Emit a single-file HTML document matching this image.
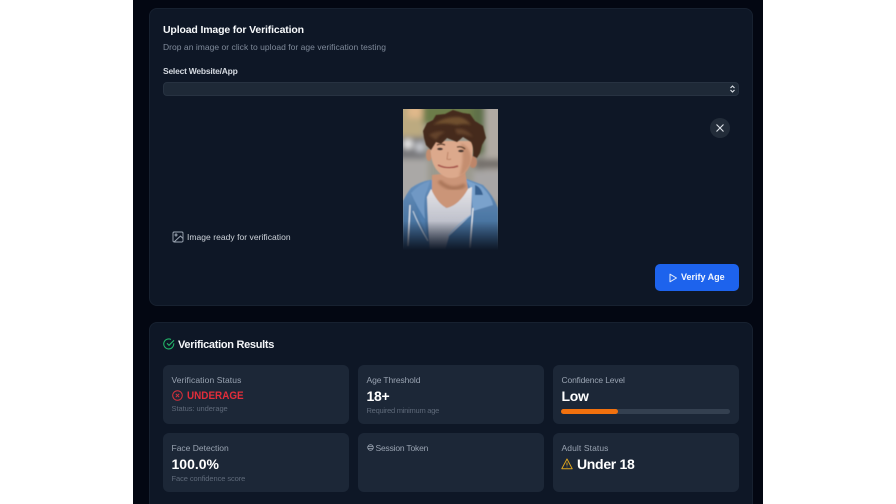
<!DOCTYPE html>
<html><head><meta charset="utf-8"><style>
*{box-sizing:border-box;margin:0;padding:0}
html,body{width:896px;height:504px;overflow:hidden;background:#fff;font-family:"Liberation Sans",sans-serif}
#root{position:absolute;left:0;top:0;width:896px;height:504px;overflow:hidden}
.wrap{position:absolute;left:133px;top:0;width:630px;height:504px;background:#030712}
.card{position:absolute;left:149px;width:604px;background:#0e1726;border:1px solid #172130;border-radius:8px}
.t{position:absolute;white-space:nowrap;line-height:1}
.stat{position:absolute;width:186px;height:59px;background:#1c2737;border-radius:6px}
.lab{color:#99a3b1;font-size:8.5px}
.sub{color:#5f6a7a;font-size:7.5px}
.val{color:#fff;font-weight:700;font-size:14px}
svg{position:absolute;display:block}
</style></head><body><div id="root">
<div class="wrap"></div>
<div class="card" style="top:8px;height:298px"></div>
<div class="card" style="top:322px;height:182px;border-bottom:0;border-radius:8px 8px 0 0"></div>

<div class="t" style="left:163px;top:25px;font-size:10.5px;font-weight:700;color:#f8fafc;letter-spacing:-.15px">Upload Image for Verification</div>
<div class="t" style="left:163px;top:43px;font-size:8.5px;color:#7f8a9a;letter-spacing:.03px">Drop an image or click to upload for age verification testing</div>
<div class="t" style="left:163px;top:67px;font-size:8.5px;font-weight:700;color:#d5dae1;letter-spacing:-.23px">Select Website/App</div>
<div style="position:absolute;left:163px;top:82px;width:576px;height:14px;background:#1e2937;border:1px solid #273241;border-radius:4px"></div>
<svg style="left:728px;top:84px" width="9" height="10" viewBox="0 0 9 10" fill="none" stroke="#dfe4ea" stroke-width="1.1"><path d="M2.500 4 4.500 2 6.500 4M2.500 6 4.500 8 6.500 6"/></svg>

<svg style="left:403px;top:109px" width="95" height="141" viewBox="0 0 95 141">
<defs>
<linearGradient id="fade" x1="0" x2="0" y1="0" y2="1"><stop offset="0" stop-color="#0e1726" stop-opacity="0"/><stop offset="1" stop-color="#0e1726"/></linearGradient>
<linearGradient id="hood" x1="0" x2="0" y1="0" y2="1"><stop offset="0" stop-color="#6791be"/><stop offset="1" stop-color="#38638f"/></linearGradient>
<linearGradient id="shirt" x1="0" x2="0" y1="0" y2="1"><stop offset="0" stop-color="#e6e5e8"/><stop offset="1" stop-color="#9ea3b4"/></linearGradient>
<filter id="b1" x="-30%" y="-30%" width="160%" height="160%"><feGaussianBlur stdDeviation="3"/></filter>
<filter id="b2" x="-20%" y="-20%" width="140%" height="140%"><feGaussianBlur stdDeviation="1.200"/></filter>
<filter id="b3" x="-20%" y="-20%" width="140%" height="140%"><feGaussianBlur stdDeviation=".6"/></filter>
</defs>
<clipPath id="c"><rect width="95" height="141"/></clipPath>
<g clip-path="url(#c)">
<rect width="95" height="141" fill="#9b9a8f"/>
<g filter="url(#b1)">
<rect x="-5" y="-5" width="26" height="36" fill="#bcaa80"/>
<rect x="5" y="-5" width="14" height="14" fill="#e0b88a"/>
<rect x="20" y="-5" width="60" height="20" fill="#6c7c4a"/>
<rect x="70" y="-5" width="14" height="50" fill="#5f6f4a"/>
<rect x="82" y="-5" width="18" height="70" fill="#b0aaa3"/>
<rect x="-5" y="28" width="28" height="22" fill="#77777a"/>
<circle cx="5" cy="35" r="5" fill="#e8e8e8"/>
<circle cx="17" cy="38" r="5" fill="#c9cbd0"/>
<rect x="-5" y="50" width="30" height="45" fill="#aaa8a6"/>
<rect x="72" y="50" width="28" height="10" fill="#74706c"/>
<rect x="70" y="62" width="30" height="30" fill="#a8a6a6"/>
</g>
<g filter="url(#b3)">
<path d="M0 141V92Q4 84 8 79 18 72 27 71L64 70 80 76Q90 86 95 99V141z" fill="url(#hood)"/>
<path d="M23 74Q13 78 11 90q2 10 14 42L20 100z" fill="#4f7dad"/>
<path d="M8 84Q16 75 27 72L24 82Q20 88 22 110 14 98 8 84z" fill="#7098c4"/>
<path d="M63 71 78 77Q88 86 90 96L70 102 68 80z" fill="#7aa2cc"/>
<path d="M72 76q6 2 8 10l-8 0z" fill="#38618f"/>
<path d="M24 88Q25 120 27 141H42L46 127 68 106 69 78 60 82 43 99 28 80z" fill="url(#shirt)"/>
<path d="M29 66V82Q36 96 44 99 56 96 65 80L62 62z" fill="#cb9578"/>
<path d="M36 72q12 12 26 4" stroke="#a97559" stroke-width="4" fill="none" filter="url(#b2)"/>
<path d="M7 96 5 137" stroke="#e5e9ee" stroke-width="1.300" fill="none"/>
<path d="M70 99 67 139" stroke="#e5e9ee" stroke-width="1.300" fill="none"/>
<path d="M10 102Q15 115 25 132" stroke="#c5d3e0" stroke-width="1" fill="none"/>
<path d="M68 106Q55 115 45 127" stroke="#8fb1d3" stroke-width="1" fill="none"/>
</g>
<ellipse cx="26" cy="46" rx="3" ry="6" fill="#c48e70" filter="url(#b3)"/>
<ellipse cx="70" cy="53" rx="4" ry="6" fill="#bd866a" filter="url(#b3)"/>
<path d="M28 32Q26 50 33 60 40 69 48 69 58 69 64 61 71 50 70 32z" fill="#dca98c" filter="url(#b3)"/>
<path d="M58 34Q70 40 68 54 64 64 56 68 62 50 58 34z" fill="#c48e70" filter="url(#b2)"/>
<path d="M20 22 24 14 30 11 33 6 42 5 50 1 60 4 67 5 72 12 80 17 83 29 79 36 77 44 74 49 70 47Q71 38 68 33L60 28 54 33 44 29 38 35 33 33 28 41 23 36 21 29z" fill="#452b1b" filter="url(#b3)"/>
<path d="M30 16q10-8 24-8 8 0 14 8-6-2-14 0-14-3-24 0z" fill="#70502f" filter="url(#b2)"/>
<path d="M26 26q8-5 16-3-6 3-9 8zM52 20q10-2 18 8-8-3-16-3z" fill="#64432b" filter="url(#b2)"/>
<path d="M34 36q4-2 8 0M54 38q5-1 8 2" stroke="#4a3022" stroke-width="1.100" fill="none" filter="url(#b3)"/>
<ellipse cx="37" cy="40" rx="2.800" ry="1.100" fill="#40302b" filter="url(#b3)"/>
<ellipse cx="58" cy="42" rx="2.800" ry="1.100" fill="#40302b" filter="url(#b3)"/>
<path d="M45 43 44 50q2 1 4 0" stroke="#bd8569" stroke-width="1" fill="none" filter="url(#b3)"/>
<path d="M35 56q10 5 20 1" stroke="#a4544c" stroke-width="1.500" fill="none" filter="url(#b3)"/>
<rect y="112" width="95" height="29" fill="url(#fade)"/>
</g>
</svg>

<div style="position:absolute;left:710px;top:118px;width:20px;height:20px;border-radius:50%;background:#222c39"></div>
<svg style="left:714.500px;top:123px" width="10" height="10" viewBox="0 0 10 10" fill="none" stroke="#dde2e8" stroke-width="1.100"><path d="M1.500 1.500l7 7M8.500 1.500l-7 7"/></svg>

<svg style="left:171.500px;top:231px" width="12" height="12" viewBox="0 0 12 12" fill="none" stroke="#9fa9b6" stroke-width=".9"><rect x="1" y="1" width="10" height="10" rx="1.200"/><circle cx="4" cy="4" r="1"/><path d="M11 7.500 8.500 5 2 11"/></svg>
<div class="t" style="left:187px;top:233px;font-size:8.500px;color:#cdd3da;letter-spacing:.04px">Image ready for verification</div>

<div style="position:absolute;left:655px;top:264px;width:84px;height:27px;background:#1d63ed;border-radius:5px"></div>
<svg style="left:667.500px;top:272.500px" width="10" height="10" viewBox="0 0 10 10" fill="none" stroke="#e4ecfb" stroke-width="1"><path d="M2 1.200v7.600L8.500 5z" stroke-linejoin="round"/></svg>
<div class="t" style="left:681px;top:273px;font-size:9px;font-weight:700;color:#f2f6fe">Verify Age</div>

<svg style="left:162.500px;top:338px" width="12" height="12" viewBox="0 0 12 12" fill="none" stroke="#23b368" stroke-width="1.100"><path d="M10.700 5.300A5 5 0 1 1 8 1.500"/><path d="M4 5.300 6 7.300 11 2.300"/></svg>
<div class="t" style="left:178px;top:339.500px;font-size:11px;font-weight:700;color:#f3f5f8;letter-spacing:-.3px">Verification Results</div>

<div class="stat" style="left:163px;top:365px"></div>
<div class="stat" style="left:358px;top:365px"></div>
<div class="stat" style="left:553px;top:365px"></div>
<div class="stat" style="left:163px;top:433px"></div>
<div class="stat" style="left:358px;top:433px"></div>
<div class="stat" style="left:553px;top:433px"></div>

<div class="t lab" style="left:171.500px;top:376px;letter-spacing:.1px">Verification Status</div>
<svg style="left:171.500px;top:390px" width="11" height="11" viewBox="0 0 11 11" fill="none" stroke="#d8303c" stroke-width="1"><circle cx="5.500" cy="5.500" r="4.800"/><path d="M3.800 3.800l3.400 3.400M7.200 3.800 3.800 7.200"/></svg>
<div class="t" style="left:187px;top:390.500px;font-size:11px;font-weight:700;color:#e22d3a;transform:scaleX(.9);transform-origin:left">UNDERAGE</div>
<div class="t sub" style="left:171.500px;top:405px;letter-spacing:-.06px">Status: underage</div>

<div class="t lab" style="left:366.500px;top:376px;letter-spacing:-.1px">Age Threshold</div>
<div class="t val" style="left:366.500px;top:388.500px;letter-spacing:-.3px">18+</div>
<div class="t sub" style="left:366.500px;top:407px;letter-spacing:-.25px">Required minimum age</div>

<div class="t lab" style="left:561.500px;top:376px;letter-spacing:-.15px">Confidence Level</div>
<div class="t val" style="left:561.500px;top:388.500px;letter-spacing:-.3px">Low</div>
<div style="position:absolute;left:561px;top:409px;width:169px;height:5px;border-radius:3px;background:#344050"></div>
<div style="position:absolute;left:561px;top:409px;width:57px;height:5px;border-radius:3px;background:#f2710e"></div>

<div class="t lab" style="left:171.500px;top:444px">Face Detection</div>
<div class="t val" style="left:171.500px;top:456.500px">100.0%</div>
<div class="t sub" style="left:171.500px;top:475px;letter-spacing:-.08px">Face confidence score</div>

<svg style="left:366.500px;top:444px" width="7" height="7" viewBox="0 0 7 7" fill="none" stroke="#99a3b1" stroke-width=".8"><circle cx="3.500" cy="3.500" r="2.800"/><path d="M1 2.600h5M1 4.400h5"/></svg>
<div class="t lab" style="left:375.500px;top:444px;letter-spacing:-.19px">Session Token</div>

<div class="t lab" style="left:561.500px;top:444px;letter-spacing:.1px">Adult Status</div>
<svg style="left:561px;top:458px" width="12" height="12" viewBox="0 0 12 12" fill="none" stroke="#dca51f" stroke-width="1"><path d="M6 1 .8 10.700h10.400z" stroke-linejoin="round"/><path d="M6 4.500v3M6 8.700v.6"/></svg>
<div class="t val" style="left:577px;top:456.500px;letter-spacing:-.3px">Under 18</div>
</div></body></html>
